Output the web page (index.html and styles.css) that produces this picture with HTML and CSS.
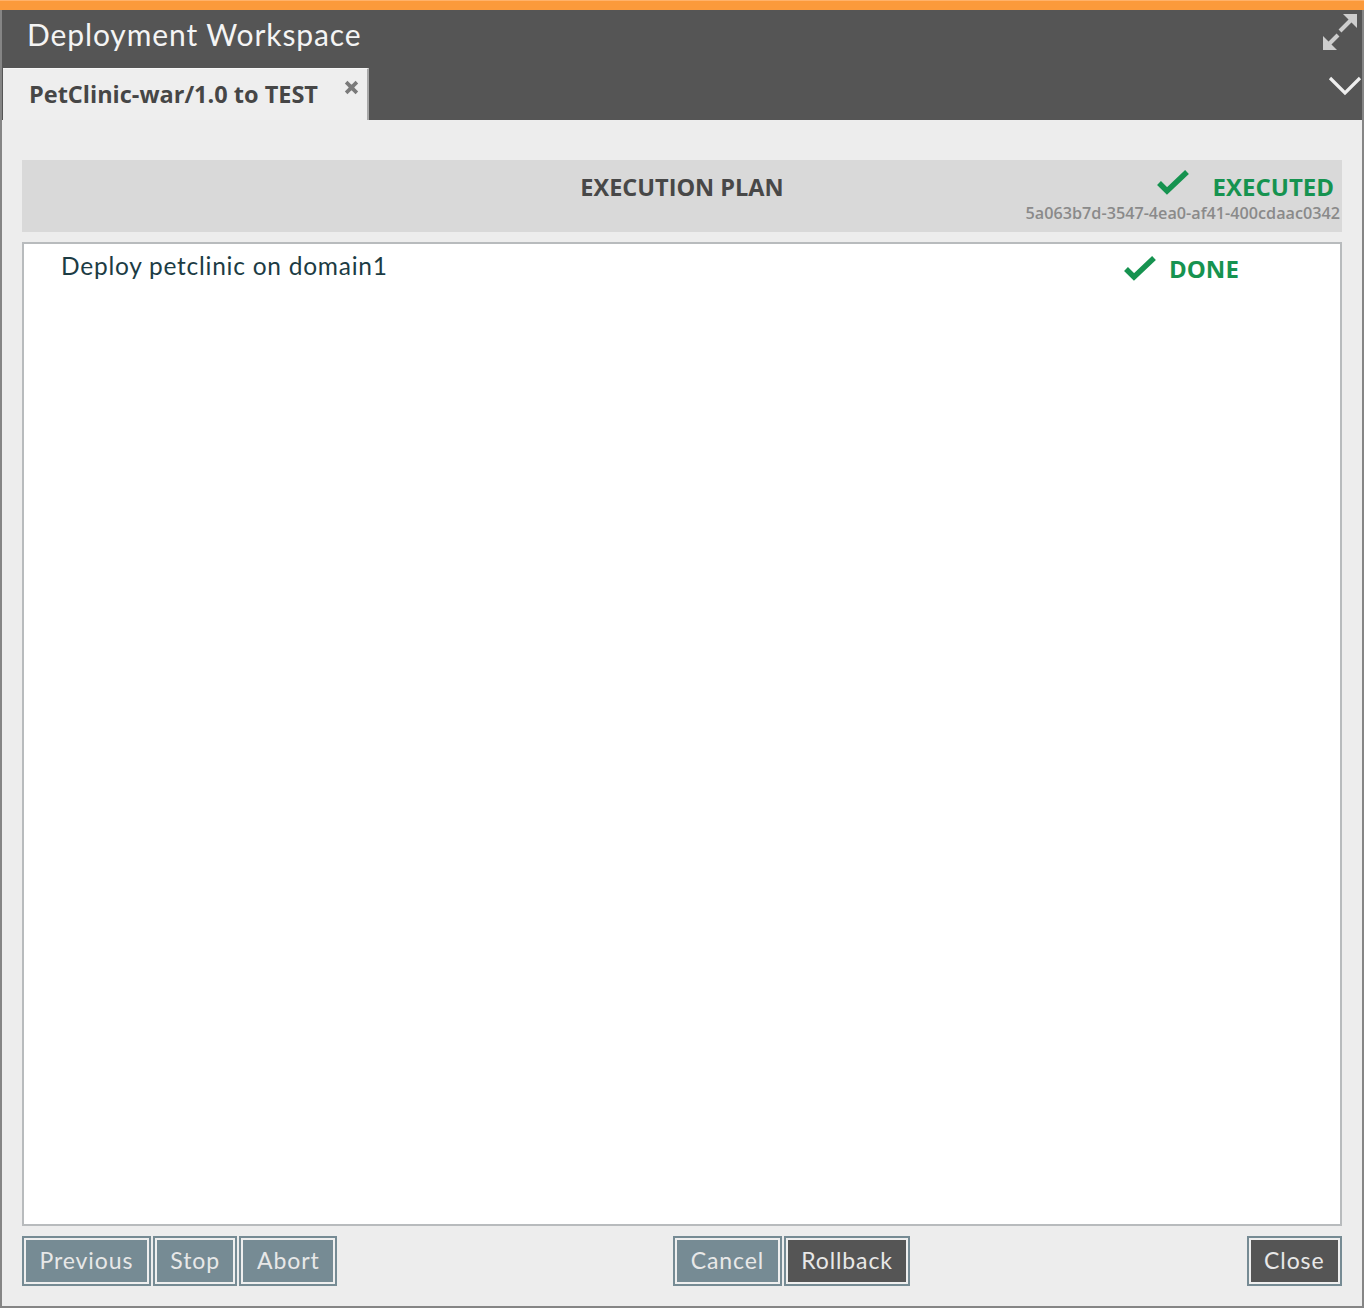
FILE: index.html
```html
<!DOCTYPE html>
<html>
<head>
<meta charset="utf-8">
<link rel="stylesheet" href="styles.css">
</head>
<body>
<div class="window">
  <div class="topbar"></div>
  <div class="header">
    <div class="title-row">
      <h1 class="title">Deployment Workspace</h1>
      <svg class="icon-expand" width="40" height="40" viewBox="0 0 40 40">
        <polygon points="37,2 37,16 23,2" fill="#cdcdcd"/>
        <line x1="31" y1="8" x2="20" y2="19" stroke="#cdcdcd" stroke-width="4"/>
        <polygon points="3,38 3,24 17,38" fill="#cdcdcd"/>
        <line x1="9" y1="32" x2="18" y2="23" stroke="#cdcdcd" stroke-width="4"/>
      </svg>
    </div>
    <div class="tab-row">
      <div class="tab">
        <span class="tab-label">PetClinic-war/1.0 to TEST</span>
        <svg class="tab-close" width="15" height="15" viewBox="0 0 14 14">
          <path d="M2 2 L12 12 M12 2 L2 12" stroke="#7a7a7a" stroke-width="3.4"/>
          <rect x="4.5" y="4.5" width="5" height="5" fill="#7a7a7a"/>
        </svg>
      </div>
      <svg class="icon-chevron" width="34" height="22" viewBox="0 0 34 22">
        <polyline points="2,3 17,18 32,3" fill="none" stroke="#eeeeee" stroke-width="3.2"/>
      </svg>
    </div>
  </div>
  <div class="body">
    <div class="plan-head">
      <div class="plan-spacer"></div>
      <div class="plan-title">EXECUTION PLAN</div>
      <div class="plan-status">
        <div class="status-line">
          <svg class="check" width="32" height="26" viewBox="0 0 32 26">
            <polyline points="2,13 10,21 30,2" fill="none" stroke="#169350" stroke-width="5.5"/>
          </svg>
          <span class="status-text">EXECUTED</span>
        </div>
        <div class="plan-id">5a063b7d-3547-4ea0-af41-400cdaac0342</div>
      </div>
    </div>
    <div class="panel">
      <div class="task">
        <span class="task-name">Deploy petclinic on domain1</span>
        <span class="task-state">
          <svg class="check" width="32" height="26" viewBox="0 0 32 26">
            <polyline points="2,13 10,21 30,2" fill="none" stroke="#169350" stroke-width="5.5"/>
          </svg>
          <span class="done-text">DONE</span>
        </span>
      </div>
    </div>
    <div class="buttons">
      <div class="btn-group">
        <button class="btn">Previous</button>
        <button class="btn">Stop</button>
        <button class="btn">Abort</button>
      </div>
      <div class="btn-group">
        <button class="btn">Cancel</button>
        <button class="btn btn-dark">Rollback</button>
      </div>
      <div class="btn-group">
        <button class="btn btn-dark">Close</button>
      </div>
    </div>
  </div>
</div>
</body>
</html>
```
FILE: styles.css
```css
html, body {
  margin: 0;
  padding: 0;
  background: #ededed;
}
.window {
  width: 1364px;
  height: 1308px;
  box-sizing: border-box;
  display: flex;
  flex-direction: column;
  border-left: 2px solid #858585;
  border-right: 2px solid #858585;
  border-bottom: 2px solid #858585;
  background: #ededed;
}
.topbar {
  height: 10px;
  background: #fb9a3b;
  border-top: 1px solid #ffb26a;
  box-sizing: border-box;
  margin: 0 -2px;
}
.header {
  height: 110px;
  background: #555555;
  display: flex;
  flex-direction: column;
}
.title-row {
  height: 58px;
  display: flex;
  justify-content: space-between;
  align-items: flex-start;
}
.title {
  margin: 0;
  padding: 5px 0 0 25px;
  font-family: Lato, "Open Sans", sans-serif;
  font-weight: 400;
  font-size: 30px;
  line-height: 38px;
  letter-spacing: 0.9px;
  color: #f4f4f4;
}
.icon-expand {
  margin: 2px 2px 0 0;
}
.tab-row {
  height: 52px;
  display: flex;
  justify-content: space-between;
  align-items: flex-start;
}
.tab {
  width: 366px;
  height: 52px;
  margin-left: 1px;
  box-sizing: border-box;
  background: #eeeeee;
  border-right: 2px solid #a8a8a8;
  border-top: 1px solid #f7f7f7;
  display: flex;
  justify-content: space-between;
  align-items: flex-start;
}
.tab-label {
  padding: 9px 0 0 26px;
  font-family: "Open Sans", sans-serif;
  font-weight: 700;
  font-size: 23.5px;
  line-height: 32px;
  color: #464646;
}
.tab-close {
  margin: 11px 8px 0 0;
}
.icon-chevron {
  margin: 7px 0 0 0;
}
.body {
  flex: 1;
  display: flex;
  flex-direction: column;
  padding: 40px 20px 20px 20px;
  gap: 10px;
}
.plan-head {
  height: 72px;
  background: #d9d9d9;
  display: grid;
  grid-template-columns: 1fr auto 1fr;
}
.plan-title {
  padding-top: 11px;
  font-family: "Open Sans", sans-serif;
  font-weight: 700;
  font-size: 23.5px;
  line-height: 32px;
  color: #484848;
}
.plan-status {
  display: flex;
  flex-direction: column;
  align-items: flex-end;
  padding: 9px 2px 0 0;
}
.status-line {
  display: flex;
  align-items: center;
  gap: 24px;
  margin-right: 6px;
  height: 34px;
}
.status-line .check {
  margin-top: -6px;
}
.status-text, .done-text {
  font-family: "Open Sans", sans-serif;
  font-weight: 700;
  font-size: 24px;
  color: #169350;
}
.plan-id {
  font-family: "Open Sans", sans-serif;
  font-weight: 600;
  font-size: 16.2px;
  line-height: 20px;
  color: #8a8a8a;
  margin-top: 0px;
}
.panel {
  flex: 1;
  background: #ffffff;
  border: 2px solid #b8bbbd;
}
.task {
  display: flex;
  justify-content: space-between;
  align-items: center;
  padding: 2px 0 0 37px;
}
.task-name {
  font-family: Lato, "Open Sans", sans-serif;
  font-size: 24.5px;
  line-height: 32px;
  letter-spacing: 0.75px;
  color: #1c3c44;
}
.task-state {
  display: flex;
  align-items: center;
  gap: 13px;
  width: 216px;
  margin-top: 6px;
}
.buttons {
  height: 50px;
  display: flex;
  justify-content: space-between;
}
.btn-group {
  display: flex;
  gap: 2px;
}
.btn {
  margin: 0;
  height: 50px;
  padding: 0 15.5px 3px 15.5px;
  border: 2px solid #768b94;
  box-shadow: inset 0 0 0 2px #efefef;
  background: #768b94;
  color: #e8e8e8;
  font-family: Lato, "Open Sans", sans-serif;
  font-size: 23px;
  line-height: 30px;
  letter-spacing: 0.9px;
}
.btn-dark {
  background: #555555;
}
```
